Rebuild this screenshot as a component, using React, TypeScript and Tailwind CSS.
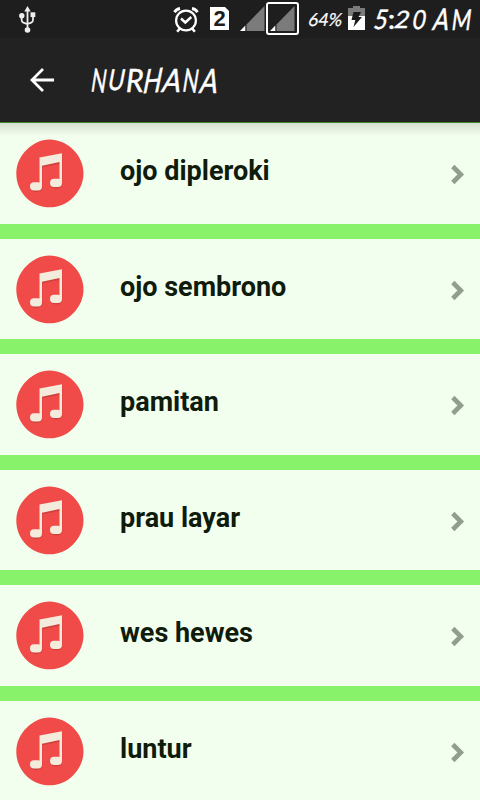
const songs = ["ojo dipleroki", "ojo sembrono", "pamitan", "prau layar", "wes hewes", "luntur"];

type Glyph = { char: string; slot: string; tilt: string };

// Each letter gets its own slot and tilt so the line looks handwritten.
const titleGlyphs: Glyph[] = [
  { char: "N", slot: "w-[17px]", tilt: "scale-x-[0.62] -skew-x-[14deg] skew-y-[4deg]" },
  { char: "U", slot: "w-[18px]", tilt: "scale-x-[0.7] scale-y-[0.9] -skew-x-[14deg] -translate-y-px" },
  { char: "R", slot: "w-[18px]", tilt: "scale-x-[0.88] -skew-x-[8deg]" },
  { char: "H", slot: "w-[19px]", tilt: "scale-x-[0.74] scale-y-[1.05] -skew-x-[16deg] -skew-y-[4deg]" },
  { char: "A", slot: "w-[20px]", tilt: "scale-x-[0.86] -skew-x-[16deg]" },
  { char: "N", slot: "w-[17px]", tilt: "scale-x-[0.64] -skew-x-[14deg] skew-y-[4deg]" },
  { char: "A", slot: "w-[20px]", tilt: "scale-x-[0.82] scale-y-[1.05] -skew-x-[16deg]" },
];

const clockGlyphs: Glyph[] = [
  { char: "5", slot: "w-[13px]", tilt: "scale-x-[0.78] scale-y-[0.9] -skew-x-[14deg] -translate-y-px" },
  { char: ":", slot: "w-[7px]", tilt: "scale-y-[0.9] -translate-y-px" },
  { char: "2", slot: "w-[16px]", tilt: "scale-x-[0.84] scale-y-[0.8] -skew-x-[12deg] -translate-y-px" },
  { char: "0", slot: "w-[17px]", tilt: "scale-x-[0.74] scale-y-[0.88] -skew-x-[12deg] -translate-y-px" },
  { char: " ", slot: "w-[5px]", tilt: "" },
  { char: "A", slot: "w-[19px]", tilt: "scale-x-[0.78] -skew-x-[16deg] -translate-y-px" },
  { char: "M", slot: "w-[20px]", tilt: "scale-x-[0.7] scale-y-[0.95] -skew-x-[10deg]" },
];

function Handwritten({ glyphs }: { glyphs: Glyph[] }) {
  return (
    <span className="flex whitespace-pre [-webkit-text-stroke:0.5px_white]">
      {glyphs.map((g, i) => (
        <span key={i} className={`flex shrink-0 justify-center ${g.slot}`}>
          <span className={`inline-block ${g.tilt}`}>{g.char}</span>
        </span>
      ))}
    </span>
  );
}

function UsbIcon() {
  return (
    <svg className="ml-[18px] mt-[6px] h-[28px] w-[19px] shrink-0" viewBox="0 0 19 28" fill="none" stroke="#eee" strokeWidth="1.8">
      <path d="M9.5 4v20M3.6 10v3.8q0 2.2 1.7 2.8l4.2 1.5M15 10v3.8q0 2.2-1.7 2.8L9.5 18" />
      <path d="M9.5 0 12.7 5.5H6.300z" fill="#eee" stroke="none" />
      <circle cx="3.8" cy="9.8" r="2.7" fill="#eee" stroke="none" />
      <path d="M12.5 6.300h4.800v4.800h-4.800z" fill="#eee" stroke="none" />
      <circle cx="9.5" cy="24" r="2.8" fill="#eee" stroke="none" />
    </svg>
  );
}

function AlarmIcon() {
  return (
    <svg className="ml-[136px] mt-[7px] h-[26px] w-[26px] shrink-0" viewBox="0 0 26 26" fill="none" stroke="#fff" strokeWidth="2.2">
      <circle cx="13" cy="13.5" r="9.9" />
      <path d="m8 11.5 4.3 4 6-5.5" strokeWidth="2.4" />
      <path d="M1.5 5.2Q3.2 2.2 7 1.5M24.5 5.2Q22.8 2.2 19 1.5" strokeWidth="2.8" />
      <path d="m6.8 21.5-2.6 3.3M19.2 21.5l2.6 3.3" strokeWidth="2.6" />
    </svg>
  );
}

function Signal() {
  return (
    <svg className="h-[25px] w-[25px] shrink-0" viewBox="0 0 25 25">
      <path d="M6.5 18.5 24.5 0v25h-18z" fill="#7b7b7b" />
      <path d="M0 25 5.3 19.5V25z" fill="#fff" />
    </svg>
  );
}

function BatteryIcon() {
  return (
    <svg className="ml-[5px] mt-[6px] h-[24px] w-[17px] shrink-0" viewBox="0 0 17 24">
      <path d="M5 0h7v2h5v8H0V2h5z" fill="#7b7b7b" />
      <path d="M0 10h17v14H0z" fill="#fff" />
      <path d="M5.5 6H13l-2.5 5H14L5.5 21 7.3 14H3.5z" fill="#1a1a1a" />
    </svg>
  );
}

function StatusBar() {
  return (
    <div className="flex h-[38px] items-start bg-[#1e1e1e] text-white">
      <UsbIcon />
      <AlarmIcon />
      <div className="ml-[11px] mt-[7px] h-[23px] w-[19px] shrink-0 bg-white text-center font-['Liberation_Sans',sans-serif] text-[22px] leading-[24px] font-bold text-[#1e1e1e] [clip-path:polygon(0_0,15px_0,19px_4px,19px_100%,0_100%)]">
        2
      </div>
      <div className="ml-[11px] mt-[6px]">
        <Signal />
      </div>
      <div className="ml-px mt-[2px] flex h-[33px] w-[33px] shrink-0 items-center justify-center rounded-[3px] border-2 border-white">
        <Signal />
      </div>
      <div className="ml-[10px] mt-[7px] w-[34px] shrink-0 whitespace-nowrap font-['Lato',sans-serif] text-[18px] leading-[24px] [-webkit-text-stroke:0.2px_white]">
        <span className="inline-block origin-left scale-x-[0.95] -skew-x-12">64%</span>
      </div>
      <BatteryIcon />
      <div className="ml-[10px] mt-[2px] shrink-0 font-['Lato',sans-serif] text-[30px] leading-[34px]">
        <Handwritten glyphs={clockGlyphs} />
      </div>
    </div>
  );
}

function Toolbar() {
  return (
    <div className="flex h-[84px] items-center bg-[#222]">
      <svg className="ml-[30px] h-[24px] w-[24px] shrink-0" viewBox="0 0 24 24" fill="none" stroke="#fff" strokeWidth="2.8">
        <path d="M24 12H2M13 1 2 12l11 11" />
      </svg>
      <h1 className="ml-[37px] font-['Lato',sans-serif] text-[32px] leading-[40px] font-normal text-white">
        <Handwritten glyphs={titleGlyphs} />
      </h1>
    </div>
  );
}

function MusicIcon() {
  return (
    <svg className="ml-[16px] mt-[1px] h-[69px] w-[68px] shrink-0" viewBox="0 0 68 69">
      <path d="M33.5 .5C42 .5 50 4 56.5 10C64 17 67.5 26 67.5 34.5C67.5 43 64 51.5 56.5 59C50 65.5 42 68.300 33.5 68.300C25 68.300 17 65 11 59.5C4 52.5 .3 44 .3 34.5C.3 25 4.5 16.5 11 10.5C17 4.5 25 .5 33.5 .5Z" fill="#f04b48" />
      <g fill="#b83c36" opacity=".6" transform="translate(0.3 1.2)">
        <path d="M23.5 18.5 46 14.5V41h-2V23.5L26 27v20h-2.5z" />
        <ellipse cx="20" cy="47.5" rx="6" ry="4.4" />
        <ellipse cx="40" cy="44" rx="6" ry="4.4" />
      </g>
      <g fill="#f3ebdc">
        <path d="M23.5 18.5 46 14.3V43h-2.5V23L26 26.8V47h-2.5z" />
        <rect x="14" y="43.3" width="12" height="8.3" rx="4.1" />
        <rect x="34" y="39.7" width="12" height="8.3" rx="4.1" />
      </g>
    </svg>
  );
}

function SongRow({ title }: { title: string }) {
  return (
    <li className="flex h-[100.5px] shrink-0 items-center bg-[#f3ffee]">
      <MusicIcon />
      <span className="ml-[36px] flex-1 pb-[4px] font-['Roboto',sans-serif] text-[27px] leading-[32px] font-bold text-[#0f1b0b]">
        {title}
      </span>
      <svg className="mr-[15px] mt-[3px] h-[21px] w-[15px]" viewBox="0 0 15 21" fill="none" stroke="#919d8e" strokeWidth="4.6">
        <path d="m2.8 2.5 8 8-8 8" />
      </svg>
    </li>
  );
}

export default function App() {
  return (
    <div className="flex h-[800px] w-[480px] flex-col overflow-hidden bg-[#88f36a]">
      <StatusBar />
      <Toolbar />
      <div className="relative min-h-0 flex-1 border-t border-[#43862f]">
        <div className="absolute inset-x-0 top-0 h-[13px] bg-gradient-to-b from-black/12 to-transparent" />
        <ul className="flex flex-col gap-[15px]">
          {songs.map((song) => (
            <SongRow key={song} title={song} />
          ))}
        </ul>
      </div>
    </div>
  );
}
